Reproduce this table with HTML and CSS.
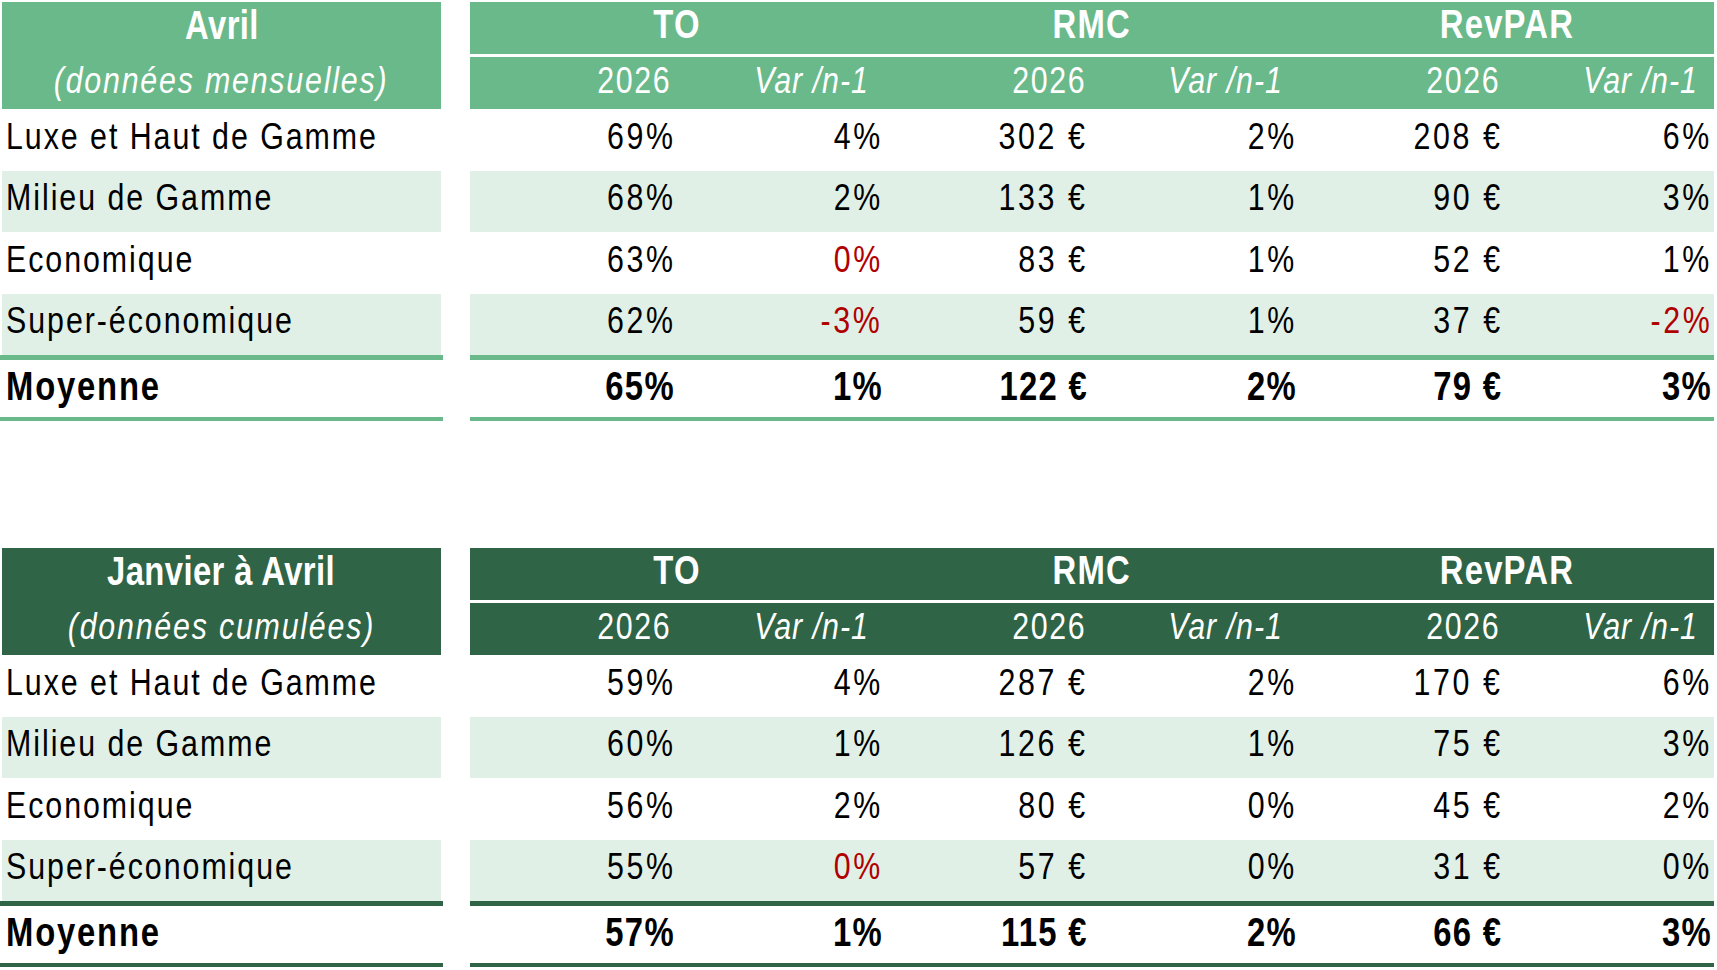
FILE: index.html
```html
<!DOCTYPE html>
<html lang="fr">
<head>
<meta charset="utf-8">
<title>Performances hôtelières</title>
<link rel="stylesheet" href="styles.css">
</head>
<body>
<div class="page">

  <section class="tbl light">
    <div class="head">
      <div class="corner">
        <div class="ct1"><span class="t">Avril</span></div>
        <div class="ct2"><span class="t">(données mensuelles)</span></div>
      </div>
      <div class="hright">
        <div class="groups">
          <div class="g"><span class="t">TO</span></div>
          <div class="g"><span class="t">RMC</span></div>
          <div class="g"><span class="t">RevPAR</span></div>
        </div>
        <div class="subs">
          <div class="s yr"><span class="t">2026</span></div>
          <div class="s var"><span class="t">Var /n-1</span></div>
          <div class="s yr"><span class="t">2026</span></div>
          <div class="s var"><span class="t">Var /n-1</span></div>
          <div class="s yr"><span class="t">2026</span></div>
          <div class="s var"><span class="t">Var /n-1</span></div>
        </div>
      </div>
    </div>
    <div class="row">
      <div class="lab"><span class="t">Luxe et Haut de Gamme</span></div>
      <div class="vals"><div class="v"><span class="t">69%</span></div><div class="v"><span class="t">4%</span></div><div class="v eur"><span class="t">302 €</span></div><div class="v"><span class="t">2%</span></div><div class="v eur"><span class="t">208 €</span></div><div class="v"><span class="t">6%</span></div></div>
    </div>
    <div class="row alt">
      <div class="lab"><span class="t">Milieu de Gamme</span></div>
      <div class="vals"><div class="v"><span class="t">68%</span></div><div class="v"><span class="t">2%</span></div><div class="v eur"><span class="t">133 €</span></div><div class="v"><span class="t">1%</span></div><div class="v eur"><span class="t">90 €</span></div><div class="v"><span class="t">3%</span></div></div>
    </div>
    <div class="row">
      <div class="lab"><span class="t">Economique</span></div>
      <div class="vals"><div class="v"><span class="t">63%</span></div><div class="v neg"><span class="t">0%</span></div><div class="v eur"><span class="t">83 €</span></div><div class="v"><span class="t">1%</span></div><div class="v eur"><span class="t">52 €</span></div><div class="v"><span class="t">1%</span></div></div>
    </div>
    <div class="row alt">
      <div class="lab"><span class="t">Super-économique</span></div>
      <div class="vals"><div class="v"><span class="t">62%</span></div><div class="v neg"><span class="t">-3%</span></div><div class="v eur"><span class="t">59 €</span></div><div class="v"><span class="t">1%</span></div><div class="v eur"><span class="t">37 €</span></div><div class="v neg"><span class="t">-2%</span></div></div>
    </div>
    <div class="row total">
      <div class="lab"><span class="t">Moyenne</span></div>
      <div class="vals"><div class="v"><span class="t">65%</span></div><div class="v"><span class="t">1%</span></div><div class="v eur"><span class="t">122 €</span></div><div class="v"><span class="t">2%</span></div><div class="v eur"><span class="t">79 €</span></div><div class="v"><span class="t">3%</span></div></div>
    </div>
  </section>

  <section class="tbl dark">
    <div class="head">
      <div class="corner">
        <div class="ct1"><span class="t">Janvier à Avril</span></div>
        <div class="ct2"><span class="t">(données cumulées)</span></div>
      </div>
      <div class="hright">
        <div class="groups">
          <div class="g"><span class="t">TO</span></div>
          <div class="g"><span class="t">RMC</span></div>
          <div class="g"><span class="t">RevPAR</span></div>
        </div>
        <div class="subs">
          <div class="s yr"><span class="t">2026</span></div>
          <div class="s var"><span class="t">Var /n-1</span></div>
          <div class="s yr"><span class="t">2026</span></div>
          <div class="s var"><span class="t">Var /n-1</span></div>
          <div class="s yr"><span class="t">2026</span></div>
          <div class="s var"><span class="t">Var /n-1</span></div>
        </div>
      </div>
    </div>
    <div class="row">
      <div class="lab"><span class="t">Luxe et Haut de Gamme</span></div>
      <div class="vals"><div class="v"><span class="t">59%</span></div><div class="v"><span class="t">4%</span></div><div class="v eur"><span class="t">287 €</span></div><div class="v"><span class="t">2%</span></div><div class="v eur"><span class="t">170 €</span></div><div class="v"><span class="t">6%</span></div></div>
    </div>
    <div class="row alt">
      <div class="lab"><span class="t">Milieu de Gamme</span></div>
      <div class="vals"><div class="v"><span class="t">60%</span></div><div class="v"><span class="t">1%</span></div><div class="v eur"><span class="t">126 €</span></div><div class="v"><span class="t">1%</span></div><div class="v eur"><span class="t">75 €</span></div><div class="v"><span class="t">3%</span></div></div>
    </div>
    <div class="row">
      <div class="lab"><span class="t">Economique</span></div>
      <div class="vals"><div class="v"><span class="t">56%</span></div><div class="v"><span class="t">2%</span></div><div class="v eur"><span class="t">80 €</span></div><div class="v"><span class="t">0%</span></div><div class="v eur"><span class="t">45 €</span></div><div class="v"><span class="t">2%</span></div></div>
    </div>
    <div class="row alt">
      <div class="lab"><span class="t">Super-économique</span></div>
      <div class="vals"><div class="v"><span class="t">55%</span></div><div class="v neg"><span class="t">0%</span></div><div class="v eur"><span class="t">57 €</span></div><div class="v"><span class="t">0%</span></div><div class="v eur"><span class="t">31 €</span></div><div class="v"><span class="t">0%</span></div></div>
    </div>
    <div class="row total">
      <div class="lab"><span class="t">Moyenne</span></div>
      <div class="vals"><div class="v"><span class="t">57%</span></div><div class="v"><span class="t">1%</span></div><div class="v eur"><span class="t">115 €</span></div><div class="v"><span class="t">2%</span></div><div class="v eur"><span class="t">66 €</span></div><div class="v"><span class="t">3%</span></div></div>
    </div>
  </section>

</div>
</body>
</html>
```

FILE: styles.css
```css
* { box-sizing: border-box; }

body {
  margin: 0;
  background: #ffffff;
  color: #000000;
  font-family: "Liberation Sans", Arial, sans-serif;
}

.page {
  padding: 2px 3px 0 2px;
  display: flex;
  flex-direction: column;
  gap: 127px;
  width: 1717px;
}

.tbl { --hd: #6ab98a; --alt: #e0f0e6; width: 1712px; }
.tbl.dark { --hd: #2f6446; }

/* narrow rendering of Arial-like text */
.t {
  display: inline-block;
  white-space: nowrap;
  transform: scaleX(0.82);
  transform-origin: center center;
}

/* ---------- header ---------- */
.head {
  display: flex;
  gap: 29px;
}

.corner {
  width: 439px;
  flex: none;
  background: var(--hd);
  color: #fff;
  display: flex;
  flex-direction: column;
}

.ct1 {
  height: 55px;
  display: flex;
  align-items: center;
  justify-content: center;
  padding-bottom: 8px;
  font-weight: bold;
  font-size: 40px;
  letter-spacing: 0.5px;
}

.ct2 {
  height: 52px;
  display: flex;
  align-items: center;
  justify-content: center;
  padding-bottom: 4px;
  font-style: italic;
  font-size: 37px;
  letter-spacing: 2.2px;
}

.hright {
  flex: 1;
  display: flex;
  flex-direction: column;
}

.groups {
  display: grid;
  grid-template-columns: repeat(3, 1fr);
  height: 55px;
  background: var(--hd);
  border-bottom: 3px solid #fff;
}

.g {
  display: flex;
  align-items: center;
  justify-content: center;
  padding-bottom: 8px;
  color: #fff;
  font-weight: bold;
  font-size: 40px;
  letter-spacing: 1.5px;
}

.subs {
  display: grid;
  grid-template-columns: repeat(6, 1fr);
  height: 52px;
  background: var(--hd);
}

.s {
  display: flex;
  align-items: center;
  justify-content: flex-end;
  padding-bottom: 4px;
  color: #fff;
  font-size: 37px;
  letter-spacing: 2px;
}
.s .t { transform-origin: right center; }
.s.yr { padding-right: 6px; }
.s.var { font-style: italic; letter-spacing: 1.2px; padding-right: 16px; }

/* ---------- body rows ---------- */
.row {
  display: flex;
  gap: 29px;
  height: 61.5px;
  font-size: 37px;
  letter-spacing: 2.4px;
}

.lab {
  width: 439px;
  flex: none;
  display: flex;
  align-items: center;
  padding: 0 0 6px 4px;
  overflow: visible;
}
.lab .t { transform-origin: left center; }

.vals {
  flex: 1;
  display: grid;
  grid-template-columns: repeat(6, 1fr);
}

.v {
  display: flex;
  align-items: center;
  justify-content: flex-end;
  padding: 0 2px 6px 0;
  letter-spacing: 3.2px;
}
.v .t { transform-origin: right center; }
.v.eur { padding-right: 4px; }
.v.neg { color: #b00000; }

.row.alt .lab,
.row.alt .vals { background: var(--alt); }

.row.total {
  height: 66px;
  font-weight: bold;
  font-size: 40px;
  letter-spacing: 2.2px;
}
.row.total .v { letter-spacing: 1.6px; padding-bottom: 4px; }
.row.total .lab,
.row.total .vals {
  border-top: 5px solid var(--hd);
  border-bottom: 4px solid var(--hd);
}
.row.total .lab {
  width: 443px;
  margin-left: -2px;
  margin-right: -2px;
  padding-left: 6px;
  padding-bottom: 4px;
}
```
